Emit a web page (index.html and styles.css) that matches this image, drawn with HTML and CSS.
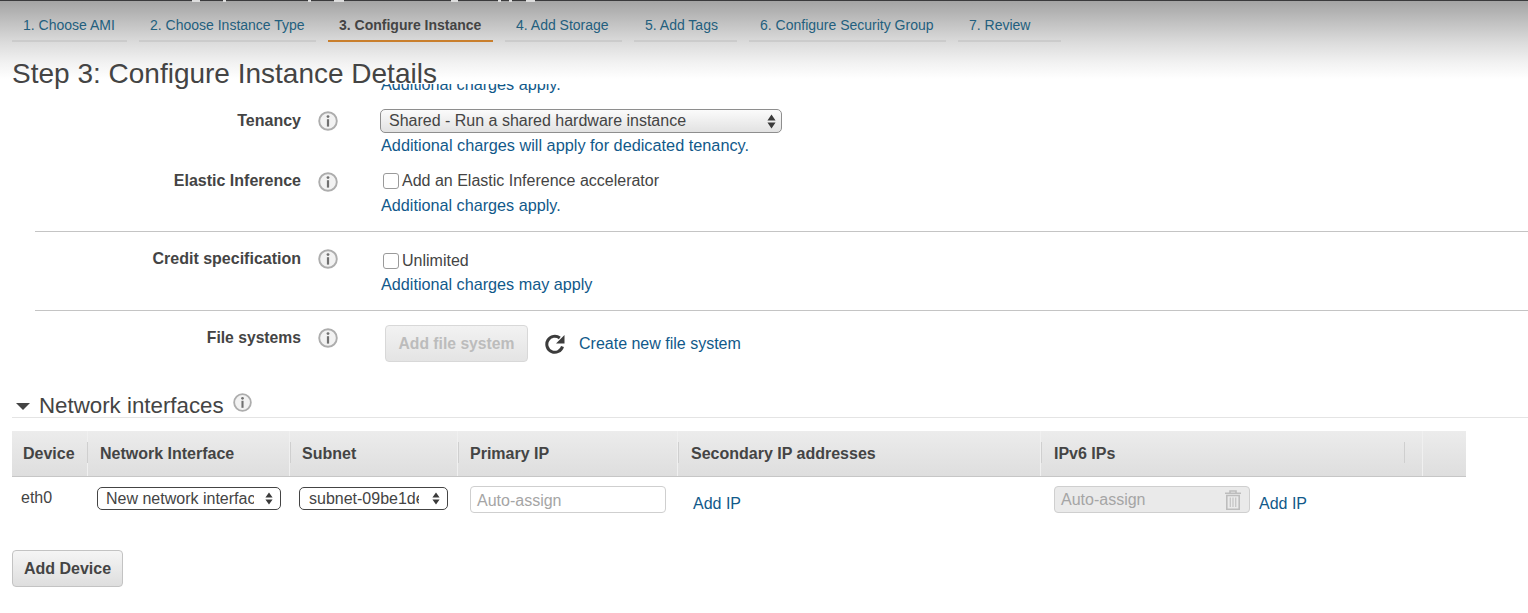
FILE: index.html
```html
<!DOCTYPE html>
<html lang="en">
<head>
<meta charset="utf-8">
<title>Step 3: Configure Instance Details</title>
<link rel="stylesheet" href="styles.css">
</head>
<body>
<svg class="sprites" aria-hidden="true">
  <symbol id="info" viewBox="0 0 20 20">
    <circle cx="10" cy="10" r="8.8" fill="#f2f2f2" stroke="#adadad" stroke-width="1.9"/>
    <circle cx="10" cy="5.6" r="1.4" fill="#707070"/>
    <rect x="8.9" y="8.2" width="2.2" height="7.4" fill="#707070"/>
  </symbol>
  <symbol id="updown" viewBox="0 0 10 14" preserveAspectRatio="none">
    <path d="M5 0.5 9.5 6H.5zM5 13.5 .5 8h9z" fill="#3a3a3a"/>
  </symbol>
</svg>
<header class="top">
  <nav class="steps">
    <a class="step s1">1. Choose AMI</a>
    <a class="step s2">2. Choose Instance Type</a>
    <a class="step s3 active">3. Configure Instance</a>
    <a class="step s4">4. Add Storage</a>
    <a class="step s5">5. Add Tags</a>
    <a class="step s6">6. Configure Security Group</a>
    <a class="step s7">7. Review</a>
  </nav>
  <h1 class="title">Step 3: Configure Instance Details</h1>
</header>
<main class="content">
  <div class="clipped"><a class="link note-b-text">Additional charges apply.</a></div>

  <div class="row r-tenancy">
    <div class="label">Tenancy</div>
    <svg class="info"><use href="#info"/></svg>
    <div class="field">
      <div class="select-big"><span>Shared - Run a shared hardware instance</span><svg class="updown"><use href="#updown"/></svg></div>
      <a class="link note-a">Additional charges will apply for dedicated tenancy.</a>
    </div>
  </div>

  <div class="row r-elastic">
    <div class="label">Elastic Inference</div>
    <svg class="info"><use href="#info"/></svg>
    <div class="field">
      <label class="check"><span class="box"></span>Add an Elastic Inference accelerator</label>
      <a class="link note-b note-b-text">Additional charges apply.</a>
    </div>
  </div>

  <hr class="rule">

  <div class="row r-credit">
    <div class="label">Credit specification</div>
    <svg class="info"><use href="#info"/></svg>
    <div class="field">
      <label class="check"><span class="box"></span>Unlimited</label>
      <a class="link note-c note-b-text">Additional charges may apply</a>
    </div>
  </div>

  <hr class="rule">

  <div class="row r-files">
    <div class="label">File systems</div>
    <svg class="info"><use href="#info"/></svg>
    <div class="field field-inline">
      <button class="btn btn-disabled" type="button">Add file system</button>
      <svg class="refresh" viewBox="0 0 20 20"><path d="M17.5 12.5A8 8 0 1 1 14.8 4" fill="none" stroke="#3c3c3c" stroke-width="3"/><path d="M19.5 1V9.5H11z" fill="#3c3c3c"/></svg>
      <a class="link">Create new file system</a>
    </div>
  </div>

  <section class="net">
    <h2 class="net-title"><span class="caret"></span>Network interfaces<svg class="info info-h"><use href="#info"/></svg></h2>
    <div class="table">
      <div class="thead">
        <div class="th c1">Device</div>
        <div class="th c2">Network Interface</div>
        <div class="th c3">Subnet</div>
        <div class="th c4">Primary IP</div>
        <div class="th c5">Secondary IP addresses</div>
        <div class="th c6">IPv6 IPs</div>
        <div class="th c7"></div>
      </div>
      <div class="tbody">
        <div class="td c1 eth">eth0</div>
        <div class="td c2"><div class="select-small w1"><span>New network interface</span><svg class="updown"><use href="#updown"/></svg></div></div>
        <div class="td c3"><div class="select-small w2"><span>subnet-09be1de2</span><svg class="updown"><use href="#updown"/></svg></div></div>
        <div class="td c4"><div class="input">Auto-assign</div></div>
        <div class="td c5"><a class="link add-ip">Add IP</a></div>
        <div class="td c6">
          <div class="input input-disabled">Auto-assign
            <svg class="trash" viewBox="0 0 18 20"><path d="M6 2.5V1h6v1.5M1 3.2h16M2.8 5.5h12.4v13.7H2.8z" fill="none" stroke="#bdbdbd" stroke-width="1.6"/><path d="M6.3 7.5v9.5M9 7.5v9.5M11.7 7.5v9.5" stroke="#c6c6c6" stroke-width="1.3"/></svg>
          </div>
          <a class="link add-ip-b">Add IP</a>
        </div>
      </div>
    </div>
    <button class="btn btn-add" type="button">Add Device</button>
  </section>
</main>
</body>
</html>
```
FILE: styles.css
```css
* { box-sizing: border-box; }
html, body { margin: 0; height: 613px; overflow: hidden; }
body {
  background: #fff;
  color: #444;
  font-family: "Liberation Sans", Arial, sans-serif;
  font-size: 16px;
  position: relative;
}
.sprites { display: none; }

.top {
  position: absolute;
  left: 0; right: 0; top: 0;
  height: 84px;
  z-index: 2;
  padding-left: 12px;
  border-top: 1px solid #3a3a3c;
  background: linear-gradient(#a4a4a4 0, #c2c2c2 22px, #dcdcdc 42px, #f2f2f2 62px, #fff 78px);
}
.top::before {
  content: "";
  position: absolute;
  left: 0; top: -1px;
  width: 540px;
  height: 2px;
  background:
    linear-gradient(#ddd, #ddd) 192px 0 / 8px 2px no-repeat,
    linear-gradient(#ddd, #ddd) 223px 0 / 3px 2px no-repeat,
    linear-gradient(#ddd, #ddd) 308px 0 / 3px 2px no-repeat,
    linear-gradient(#ddd, #ddd) 334px 0 / 10px 2px no-repeat,
    linear-gradient(#ddd, #ddd) 451px 0 / 7px 2px no-repeat,
    linear-gradient(#ddd, #ddd) 498px 0 / 3px 2px no-repeat,
    linear-gradient(#ddd, #ddd) 509px 0 / 3px 2px no-repeat,
    linear-gradient(#ddd, #ddd) 526px 0 / 9px 2px no-repeat;
}
.steps { display: flex; gap: 12px; height: 41px; }
.step {
  display: block;
  height: 41px;
  padding: 15px 0 0 11px;
  font-size: 14px;
  line-height: 18px;
  text-align: left;
  color: #235f7e;
  border-bottom: 2px solid #cbcbcb;
  white-space: nowrap;
}
.s1 { width: 115px; }
.s2 { width: 177px; }
.s3 { width: 165px; }
.s4 { width: 117px; }
.s5 { width: 103px; }
.s6 { width: 197px; }
.s7 { width: 103px; }
.active { color: #444; font-weight: 700; border-bottom-color: #c97f2d; }
.title {
  margin: 17px 0 0;
  font-size: 28px;
  line-height: 30px;
  font-weight: 400;
  color: #444;
}

.content { padding-top: 74px; }
.link { color: #11598a; font-size: 16px; line-height: 20px; white-space: nowrap; }
.note-b-text { font-size: 16.2px; }
.clipped { padding-left: 381px; height: 20px; }

.row { display: flex; align-items: flex-start; }
.label {
  width: 301px;
  margin-top: 2px;
  text-align: right;
  font-weight: 700;
  color: #444;
  line-height: 20px;
}
.r-files .label { font-size: 15.7px; }
.info { width: 20px; height: 20px; margin-left: 17px; margin-top: 2px; flex: none; }
.field { margin-left: 43px; display: flex; flex-direction: column; align-items: flex-start; }

.r-tenancy { margin-top: 15px; }
.r-elastic { margin-top: 15px; }
.r-credit { margin-top: 15px; }
.r-files { margin-top: 15px; }

.select-big {
  width: 402px;
  height: 24px;
  margin-left: -1px;
  padding: 0 5px 0 8px;
  display: flex;
  align-items: center;
  justify-content: space-between;
  border: 1px solid #8e8e8e;
  border-radius: 5px;
  background: linear-gradient(#fbfbfb, #e2e2e2);
  color: #444;
  line-height: 22px;
}
.select-big .updown { width: 9px; height: 15px; }
.updown { flex: none; }
.note-a { margin-top: 2px; font-size: 16.3px; }
.note-b { margin-top: 4px; }
.note-c { margin-top: 3px; }

.check { display: flex; align-items: center; height: 20px; line-height: 20px; margin-top: 1px; }
.r-credit .check { margin-top: 4px; }
.box {
  width: 16px; height: 16px;
  margin: 0 3px 0 2px;
  border: 1px solid #9a9a9a;
  border-radius: 3px;
  background: #fff;
}
.r-elastic .label { margin-top: 1px; }
.rule { border: 0; height: 1px; background: #c4c4c4; margin: 16px 0 0 35px; }

.field-inline { flex-direction: row; align-items: center; margin-left: 47px; margin-top: -1px; }
.btn {
  display: block;
  font-family: inherit;
  font-size: 16px;
  font-weight: 700;
  border: 1px solid #c3c3c3;
  border-radius: 4px;
  background: linear-gradient(#f5f5f5, #dedede);
  color: #444;
  padding: 0;
}
.btn-disabled {
  width: 143px;
  height: 37px;
  font-size: 15.7px;
  color: #bcbcbc;
  border-color: #d8d8d8;
  background: linear-gradient(#f2f2f2, #e4e4e4);
}
.refresh { width: 20px; height: 20px; margin-left: 17px; flex: none; }
.field-inline .link { margin-left: 14px; }

.net { padding-left: 12px; }
.net-title {
  margin: 29px 0 0;
  height: 27px;
  padding-top: 4px;
  display: flex;
  align-items: center;
  font-size: 22.3px;
  line-height: 26px;
  font-weight: 400;
  color: #444;
  border-bottom: 1px solid #e4e4e4;
}
.caret {
  width: 0; height: 0;
  margin: 0 9px 0 4px;
  border-left: 7px solid transparent;
  border-right: 7px solid transparent;
  border-top: 7px solid #444;
}
.info-h { margin-left: 9px; margin-top: -7px; width: 19px; height: 19px; }

.table { width: 1454px; margin-top: 13px; }
.thead {
  display: flex;
  height: 46px;
  background: linear-gradient(#ececec, #dedede);
  border-bottom: 1px solid #c6c6c6;
}
.th {
  position: relative;
  font-weight: 700;
  line-height: 45px;
  color: #444;
  border-right: 1px solid #f0f0f0;
  white-space: nowrap;
}
.th::after {
  content: "";
  position: absolute;
  right: -2px;
  top: 11px;
  width: 1px;
  height: 21px;
  background: #cfcfcf;
}
.th.c1::after { right: -1px; }
.th.c6::after { right: 17px; }
.th.c7::after { display: none; }
.tbody { display: flex; height: 61px; }
.td { padding-top: 10px; flex: none; }
.c1 { width: 76px; padding-left: 11px; flex: none; }
.c2 { width: 202px; padding-left: 12px; flex: none; }
.c3 { width: 168px; padding-left: 12px; flex: none; }
.c4 { width: 220px; padding-left: 12px; flex: none; }
.c5 { width: 363px; padding-left: 13px; flex: none; }
.c6 { width: 382px; padding-left: 13px; flex: none; }
.c7 { width: 43px; flex: none; border-right: 0; }
.td.c1 { padding-left: 9px; }
.td.c2 { padding-left: 9px; }
.td.c3 { padding-left: 9px; }
.td.c6 { display: flex; align-items: flex-start; }
.eth { line-height: 22px; color: #444; }

.select-small {
  height: 23px;
  display: flex;
  align-items: center;
  padding: 0 7px 0 8px;
  border: 1px solid #444;
  border-radius: 5px;
  background: #fff;
  color: #444;
}
.select-small span { overflow: hidden; white-space: nowrap; display: block; flex: 1; }
.select-small .updown { width: 8px; height: 13px; }
.w1 { width: 184px; }
.w1 span { margin-right: 11px; }
.w2 { width: 149px; padding-left: 9px; }
.w2 span { margin-right: 13px; }
.input {
  width: 196px;
  height: 27px;
  margin-top: -1px;
  padding-left: 6px;
  line-height: 27px;
  font-size: 16px;
  color: #a5a5a5;
  background: #fff;
  border: 1px solid #cfcfcf;
  border-radius: 4px;
}
.input-disabled {
  background: #eaeaea;
  display: flex;
  justify-content: space-between;
  align-items: center;
  padding-right: 7px;
}
.trash { width: 18px; height: 20px; flex: none; }
.add-ip { display: block; margin-top: 7px; margin-left: 2px; }
.add-ip-b { display: block; margin-top: 7px; margin-left: 9px; }
.btn-add { width: 111px; height: 37px; margin-top: 12px; padding-top: 1px; }
```
